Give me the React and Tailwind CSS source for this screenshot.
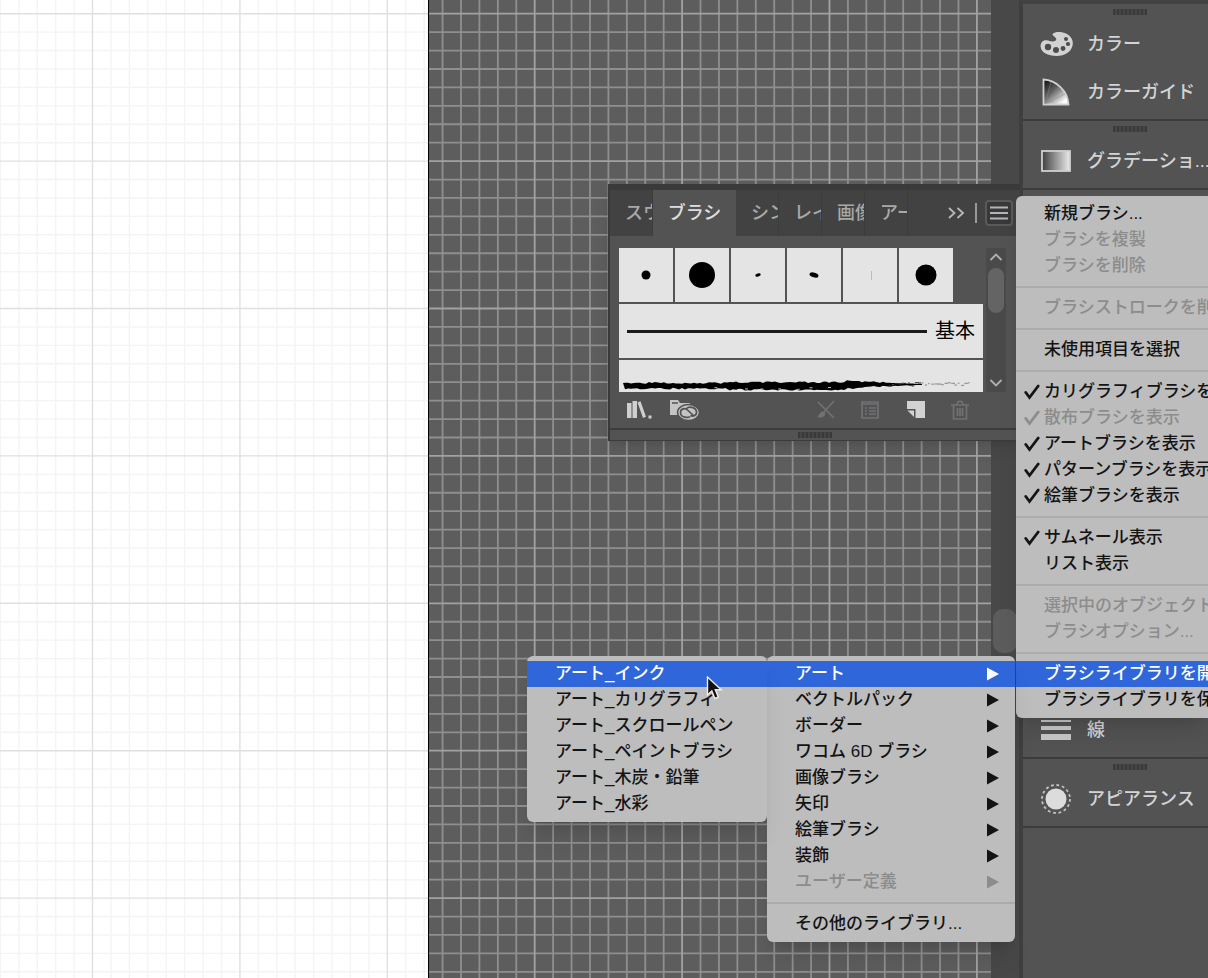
// src/App.jsx
import React from 'react';

const STEP = 147.4;

// One set of guide lines: every eighth line is a major one
const Grid = ({ originX, originY, minor, major, width }) => {
  const lines = Array.from({ length: 170 }, (_, i) => i);
  return (
    <svg className="block h-full w-full" aria-hidden="true">
      {[false, true].map((isMajor) => (
        <g key={String(isMajor)} stroke={isMajor ? major : minor} strokeWidth={width}>
          {lines
            .filter((i) => (i % 8 === 0) === isMajor)
            .map((i) => {
              const x = originX + (i * STEP) / 8;
              const y = originY + (i * STEP) / 8;
              return (
                <React.Fragment key={i}>
                  <line x1={x} x2={x} y1="0" y2="100%" />
                  <line x1="0" x2="100%" y1={y} y2={y} />
                </React.Fragment>
              );
            })}
        </g>
      ))}
    </svg>
  );
};

const Grip = () => (
  <svg width="34" height="6" viewBox="0 0 34 6" aria-hidden="true">
    <rect width="34" height="6" fill="#464647" />
    {[0, 1, 2, 3, 4, 5, 6, 7, 8].map((i) => (
      <rect key={i} x={i * 4} width="2" height="6" fill="#3a3a3b" />
    ))}
  </svg>
);

/* ---------- dock ---------- */

const PaletteIcon = () => (
  <svg width="34" height="28" viewBox="0 0 34 28" aria-hidden="true">
    <path
      d="M13 3.500C15 1.500 22 1.300 26.500 3.800c5 2.800 7 7 6.100 11.500C31.300 21.800 25 26 16.500 26 8 26 1 22.500.6 16.500.4 12.500 3 9.800 6.500 10.300c3 .5 5 1.600 7.500 1 2.300-.6 2.800-1.800 1.800-3.300C14.600 6.300 11.500 5.500 13 3.500z"
      fill="#d2d2d2"
    />
    <circle cx="8" cy="17" r="3.200" fill="#4c4c4d" />
    <circle cx="16" cy="20" r="3" fill="#4c4c4d" />
    <circle cx="23" cy="18.500" r="2.400" fill="#4c4c4d" />
    <circle cx="28" cy="14" r="2.100" fill="#4c4c4d" />
    <circle cx="26" cy="9" r="2" fill="#4c4c4d" />
  </svg>
);

const GuideIcon = () => (
  <svg width="34" height="28" viewBox="0 0 34 28" aria-hidden="true">
    <defs>
      <linearGradient id="guide" x1="0" y1="0.200" x2="0.700" y2="1">
        <stop offset="0" stopColor="#1e1e1e" />
        <stop offset="0.450" stopColor="#6a6a6a" />
        <stop offset="1" stopColor="#fff" />
      </linearGradient>
    </defs>
    <path d="M3.500 1.500C16 2 28 13 28.500 26.500h-25z" fill="url(#guide)" stroke="#d0d0d0" strokeWidth="1.800" />
    <path d="M5 26L11 4M5 26L19 9M5 26L25 16" stroke="#8a8a8a" strokeWidth="0.500" />
  </svg>
);

const GradientIcon = () => (
  <svg width="34" height="24" viewBox="0 0 34 24" aria-hidden="true">
    <defs>
      <linearGradient id="ramp">
        <stop offset="0" stopColor="#3e3e3e" />
        <stop offset="1" stopColor="#ececec" />
      </linearGradient>
    </defs>
    <rect x="2" y="2" width="28" height="20" fill="url(#ramp)" stroke="#d0d0d0" strokeWidth="1.800" />
  </svg>
);

const StrokeIcon = () => (
  <svg width="34" height="24" viewBox="0 0 34 24" fill="#c9c9c9" aria-hidden="true">
    <rect x="1" y="2" width="30" height="2" />
    <rect x="1" y="8" width="30" height="4" />
    <rect x="1" y="16" width="30" height="6" />
  </svg>
);

const AppearanceIcon = () => (
  <svg width="34" height="32" viewBox="0 0 34 32" aria-hidden="true">
    <circle cx="16" cy="16" r="10.500" fill="#dcdcdc" />
    <circle cx="16" cy="16" r="14" fill="none" stroke="#c4c4c4" strokeWidth="1.800" strokeDasharray="2.800 2.700" />
  </svg>
);

const DockSection = ({ items, fill }) => (
  <section
    className={
      fill
        ? 'flex h-[569px] flex-col justify-end border-b-2 border-[#3c3c3d] pb-[3px]'
        : 'flex flex-col border-b-2 border-[#3c3c3d] pb-[3px]'
    }
  >
    {!fill && (
      <div className="flex h-4 items-center justify-center pl-7">
        <Grip />
      </div>
    )}
    {items.map(({ label, Icon }) => (
      <button key={label} type="button" className="flex h-12 items-center gap-3 whitespace-nowrap pl-4 text-left">
        <span className="flex w-9 shrink-0 justify-center">
          <Icon />
        </span>
        <span>{label}</span>
      </button>
    ))}
  </section>
);

const Dock = () => (
  <aside className="w-[189px] shrink-0 overflow-hidden border-l-4 border-t-4 border-l-[#3f3f40] border-t-[#424243] bg-[#535354] text-lg font-medium text-[#d4d4d4]">
    <DockSection
      items={[
        { label: 'カラー', Icon: PaletteIcon },
        { label: 'カラーガイド', Icon: GuideIcon },
      ]}
    />
    <DockSection items={[{ label: 'グラデーショ...', Icon: GradientIcon }]} />
    <DockSection fill items={[{ label: '線', Icon: StrokeIcon }]} />
    <DockSection items={[{ label: 'アピアランス', Icon: AppearanceIcon }]} />
  </aside>
);

/* ---------- brushes panel ---------- */

const Tab = ({ label }) => (
  <button
    type="button"
    role="tab"
    aria-selected="false"
    className="w-[43px] shrink-0 overflow-hidden whitespace-nowrap border-r border-[#3c3c3d] pl-[15px] text-left text-[#a8a8a8]"
  >
    {label}
  </button>
);

const tips = [
  <circle cx="27" cy="27" r="4.500" />,
  <circle cx="27" cy="27" r="13" />,
  <ellipse cx="27" cy="27" rx="2.800" ry="1.600" transform="rotate(-15 27 27)" />,
  <ellipse cx="27" cy="27" rx="4.600" ry="2.400" transform="rotate(15 27 27)" />,
  <rect x="28" y="23" width="1" height="9" fill="#bcbcbc" />,
  <circle cx="27" cy="27" r="10.500" />,
];

const noise = (n) => {
  const v = Math.sin(n * 12.9898) * 43758.5453;
  return v - Math.floor(v);
};

// Charcoal edge: thick on the left, breaking up into specks on the right
const CharcoalStroke = () => {
  const top = [];
  const bottom = [];
  for (let x = 6; x <= 304; x += 3) {
    const fade = x > 240 ? 1 - (x - 240) / 76 : 1;
    const swell = x > 110 && x < 240 ? 1 : 0;
    const middle = x > 225 ? 24.5 : 26;
    top.push(`${x} ${middle - (2.200 + noise(x) * 1.800 + swell * 0.600) * fade}`);
    bottom.unshift(`${x} ${middle + (1.800 + noise(x + 500) * 1.800 + swell) * fade}`);
  }
  return (
    <svg className="block w-full" height="32" viewBox="0 0 365 32" preserveAspectRatio="xMinYMin slice" aria-hidden="true">
      <path d={`M4 23L${top.join('L')}L${bottom.join('L')}Z`} />
      {Array.from({ length: 40 }, (_, i) => (
        <rect
          key={i}
          x={220 + i * 3.3}
          y={22 + noise(i + 40) * 4}
          width={1 + noise(i + 7) * 3}
          height="1.300"
          fill={i > 24 ? '#9a9a9a' : i > 14 ? '#444' : '#000'}
        />
      ))}
      {Array.from({ length: 12 }, (_, i) => (
        <rect key={i} x={70 + i * 17 + noise(i) * 9} y={27 + noise(i + 90) * 2} width="3" height="0.900" fill="#cfcfcf" />
      ))}
    </svg>
  );
};

const BrushesPanel = () => (
  <section className="absolute right-[188px] top-[184px] w-[412px] border-l-2 border-t-[6px] border-[#3a3a3b] bg-[#535354] shadow-lg">
    <div role="tablist" className="flex h-[46px] bg-[#424243] text-lg font-medium">
      <Tab label="スウ" />
      <button type="button" role="tab" aria-selected="true" className="w-[83px] shrink-0 bg-[#535354] text-[#dedede]">
        ブラシ
      </button>
      <Tab label="シン" />
      <Tab label="レイ" />
      <Tab label="画像" />
      <Tab label="アー" />
      <div className="flex flex-1 items-center justify-end gap-2 pr-[7px]">
        <button type="button" aria-label="他のタブ">
          <svg width="20" height="14" viewBox="0 0 20 14" fill="none" stroke="#b8b8b8" strokeWidth="1.800" aria-hidden="true">
            <path d="M2 2l5.500 5L2 12M10.500 2l5.500 5-5.500 5" />
          </svg>
        </button>
        <span className="h-5 w-[2px] bg-[#9a9a9a]" />
        <button
          type="button"
          aria-label="パネルメニュー"
          className="flex h-[26px] w-7 items-center justify-center rounded-sm border-2 border-[#5a5a5b] bg-[#38383a]"
        >
          <svg width="18" height="14" viewBox="0 0 18 14" stroke="#b4b4b4" strokeWidth="1.800" aria-hidden="true">
            <path d="M0 1.500h18M0 7h18M0 12.500h18" />
          </svg>
        </button>
      </div>
    </div>

    <div className="flex gap-[3px] pl-[9px] pr-[14px] pt-3">
      <div className="flex h-36 flex-1 flex-col gap-[2px] overflow-hidden bg-[#535354]">
        <div className="flex gap-[2px]">
          {tips.map((tip, i) => (
            <button key={i} type="button" aria-label={`ブラシ ${i + 1}`} className="bg-[#e4e4e4]">
              <svg className="block" width="54" height="54" viewBox="0 0 54 54" aria-hidden="true">
                {tip}
              </svg>
            </button>
          ))}
        </div>
        <button type="button" className="flex h-[54px] shrink-0 items-center gap-2 bg-[#e4e4e4] px-2 text-xl text-black">
          <span className="h-[3px] flex-1 bg-[#1a1a1a]" />
          基本
        </button>
        <button type="button" aria-label="木炭画" className="h-[54px] shrink-0 bg-[#e4e4e4]">
          <span className="flex h-full items-start">
            <CharcoalStroke />
          </span>
        </button>
      </div>
      <div className="flex h-36 w-5 flex-col items-center justify-between bg-[#4a4a4b] py-1">
        <div className="flex flex-col items-center gap-[6px]">
          <svg width="14" height="10" viewBox="0 0 14 10" fill="none" stroke="#b0b0b0" strokeWidth="1.800" aria-hidden="true">
            <path d="M1.500 8L7 2.500 12.500 8" />
          </svg>
          <div className="h-[45px] w-4 rounded-full bg-[#646465]" />
        </div>
        <svg width="14" height="10" viewBox="0 0 14 10" fill="none" stroke="#b0b0b0" strokeWidth="1.800" aria-hidden="true">
          <path d="M1.500 2L7 7.500 12.500 2" />
        </svg>
      </div>
    </div>

    <div className="flex h-[38px] items-center justify-between border-b-2 border-[#3c3c3d] pl-4 pr-[50px]">
      <div className="flex items-center gap-4">
        <button type="button" aria-label="ブラシライブラリメニュー">
          <svg className="block" width="28" height="24" viewBox="0 0 28 24" fill="#cfcfcf" aria-hidden="true">
            <path d="M1 5h4.500v15H1zM6.500 3H11v17H6.500zM11.500 4.500l3-1.300 5.500 15.500-3 1.300zM22.500 17.500h3v3h-3z" />
          </svg>
        </button>
        <button type="button" aria-label="ライブラリパネル">
          <svg className="block" width="32" height="24" viewBox="0 0 32 24" aria-hidden="true">
            <path d="M0 17V2h8l2 3h10v12z" fill="#c4c4c4" />
            <path d="M2 5h6" stroke="#535354" strokeWidth="1.500" />
            <ellipse cx="18.500" cy="14.500" rx="11" ry="8" fill="#c4c4c4" stroke="#535354" strokeWidth="1.500" />
            <path
              d="M20 18.500c-1.500 1.500-9 1.500-9.500-3.500-.2-4.500 4.500-5.500 7-3l6.500 6M16.500 10.500c2-2 9-2 10 3 .5 4-3.500 5.500-6 4"
              fill="none"
              stroke="#535354"
              strokeWidth="1.700"
            />
          </svg>
        </button>
      </div>
      <div className="flex items-center gap-6">
        <button type="button" disabled aria-label="ブラシストロークを削除">
          <svg className="block" width="20" height="20" viewBox="0 0 20 20" fill="none" stroke="#727273" strokeWidth="1.600" aria-hidden="true">
            <path d="M2 2l16 16M18 1L8 12" />
            <path d="M7.500 11.500c-3 0-4 2-6 6 4 .5 7-.5 8-4z" fill="#727273" stroke="none" />
          </svg>
        </button>
        <button type="button" disabled aria-label="オプション">
          <svg className="block" width="20" height="20" viewBox="0 0 20 20" fill="none" stroke="#727273" strokeWidth="1.700" aria-hidden="true">
            <path d="M2 2h16v16H2zM2 4h16M5 8h2M9 8h7M5 11h2M9 11h7M5 14h2M9 14h7" />
          </svg>
        </button>
        <button type="button" aria-label="新規ブラシ">
          <svg className="block" width="22" height="20" viewBox="0 0 22 20" fill="#d2d2d2" aria-hidden="true">
            <path d="M3 1h18v17H11.500V9H3z" />
            <path d="M3.500 10.500H10V17z" />
          </svg>
        </button>
        <button type="button" disabled aria-label="ブラシを削除">
          <svg className="block" width="20" height="22" viewBox="0 0 20 22" fill="none" stroke="#727273" strokeWidth="1.600" aria-hidden="true">
            <path d="M1 6h18M7 6c0-5 6-5 6 0M3.500 6v14h13V6M7.500 9v8M10 9v8M12.500 9v8" />
          </svg>
        </button>
      </div>
    </div>
    <div className="flex h-[11px] items-center justify-center border-b border-[#3c3c3d]">
      <Grip />
    </div>
  </section>
);

/* ---------- menus ---------- */

const CheckMark = () => (
  <svg width="16" height="17" viewBox="0 0 16 17" fill="none" stroke="currentColor" strokeWidth="2.800" strokeLinecap="round" aria-hidden="true">
    <path d="M1.800 8.500L5.500 13.500 14.200 2" />
  </svg>
);

const MenuItem = ({ item }) => {
  const { label, disabled, active, checked, submenu } = item;
  let tone = 'bg-transparent text-[#141414]';
  if (disabled) tone = 'bg-transparent text-[#8c8c8c]';
  if (active) tone = 'bg-[#2f66da] text-white';

  return (
    <button
      type="button"
      role={checked ? 'menuitemcheckbox' : 'menuitem'}
      aria-checked={checked ? true : undefined}
      disabled={disabled}
      className={`flex h-[26px] w-full items-center whitespace-nowrap pl-2 pr-4 text-left ${tone}`}
    >
      <span className="w-5 shrink-0">{checked && <CheckMark />}</span>
      <span className="flex-1">{label}</span>
      {submenu && (
        <svg width="12" height="14" viewBox="0 0 12 14" fill="currentColor" aria-hidden="true">
          <path d="M0 0.500L12 7 0 13.500z" />
        </svg>
      )}
    </button>
  );
};

const MenuList = ({ items }) =>
  items.map((item, i) =>
    item === '-' ? (
      <div key={i} role="separator" className="flex h-4 items-center">
        <span className="h-[2px] w-full bg-[#acacac]" />
      </div>
    ) : (
      <MenuItem key={i} item={item} />
    )
  );

const panelMenu = [
  { label: '新規ブラシ...' },
  { label: 'ブラシを複製', disabled: true },
  { label: 'ブラシを削除', disabled: true },
  '-',
  { label: 'ブラシストロークを削除', disabled: true },
  '-',
  { label: '未使用項目を選択' },
  '-',
  { label: 'カリグラフィブラシを表示', checked: true },
  { label: '散布ブラシを表示', checked: true, disabled: true },
  { label: 'アートブラシを表示', checked: true },
  { label: 'パターンブラシを表示', checked: true },
  { label: '絵筆ブラシを表示', checked: true },
  '-',
  { label: 'サムネール表示', checked: true },
  { label: 'リスト表示' },
  '-',
  { label: '選択中のオブジェクトのオプション...', disabled: true },
  { label: 'ブラシオプション...', disabled: true },
  '-',
  { label: 'ブラシライブラリを開く', active: true },
  { label: 'ブラシライブラリを保存...' },
];

const libraryMenu = [
  { label: 'アート', active: true, submenu: true },
  { label: 'ベクトルパック', submenu: true },
  { label: 'ボーダー', submenu: true },
  { label: 'ワコム 6D ブラシ', submenu: true },
  { label: '画像ブラシ', submenu: true },
  { label: '矢印', submenu: true },
  { label: '絵筆ブラシ', submenu: true },
  { label: '装飾', submenu: true },
  { label: 'ユーザー定義', submenu: true, disabled: true },
  '-',
  { label: 'その他のライブラリ...' },
];

const artMenu = [
  { label: 'アート_インク', active: true },
  { label: 'アート_カリグラフィ' },
  { label: 'アート_スクロールペン' },
  { label: 'アート_ペイントブラシ' },
  { label: 'アート_木炭・鉛筆' },
  { label: 'アート_水彩' },
];

const App = () => (
  <div className="relative flex h-screen overflow-hidden bg-[#5d5d5e] font-['Liberation_Sans','Noto_Sans_CJK_JP',sans-serif]">
    <main className="flex min-w-0 flex-1">
      {/* Artboard */}
      <div className="w-[429px] shrink-0 border-r border-black bg-white">
        <Grid originX={-54.9} originY={-133.7} minor="#f4f4f4" major="#e0e0e0" width="1.400" />
      </div>
      {/* Pasteboard */}
      <div className="min-w-0 flex-1">
        <Grid originX={-41.7} originY={-133.7} minor="#8f8f8f" major="#a2a2a2" width="1.800" />
      </div>
      <div className="flex w-7 shrink-0 flex-col items-center bg-[#484849] pt-[609px]">
        <div className="h-11 w-6 rounded-[10px] bg-[#5c5c5d]" />
      </div>
    </main>

    <Dock />
    <BrushesPanel />

    <div
      role="menu"
      className="absolute right-0 top-[196px] w-[192px] overflow-hidden rounded-l-md bg-[#bdbdbd] py-[5px] text-[17px] font-medium shadow-xl"
    >
      <MenuList items={panelMenu} />
    </div>

    <div
      role="menu"
      className="absolute right-[193px] top-[656px] w-[248px] rounded-md bg-[#bdbdbd] py-[5px] text-[17px] font-medium shadow-xl"
    >
      <MenuList items={libraryMenu} />
    </div>

    <div
      role="menu"
      className="absolute right-[441px] top-[656px] w-[240px] rounded-md bg-[#bdbdbd] py-[5px] text-[17px] font-medium shadow-xl"
    >
      <MenuList items={artMenu} />
      <svg className="absolute right-11 top-5" width="17" height="25" viewBox="0 0 17 25" aria-hidden="true">
        <path d="M1.500 1v18l4.300-4 3 7.500 3.500-1.500-3-7.200h5.900z" fill="#111" stroke="#eee" strokeWidth="1.400" />
      </svg>
    </div>
  </div>
);

export default App;
